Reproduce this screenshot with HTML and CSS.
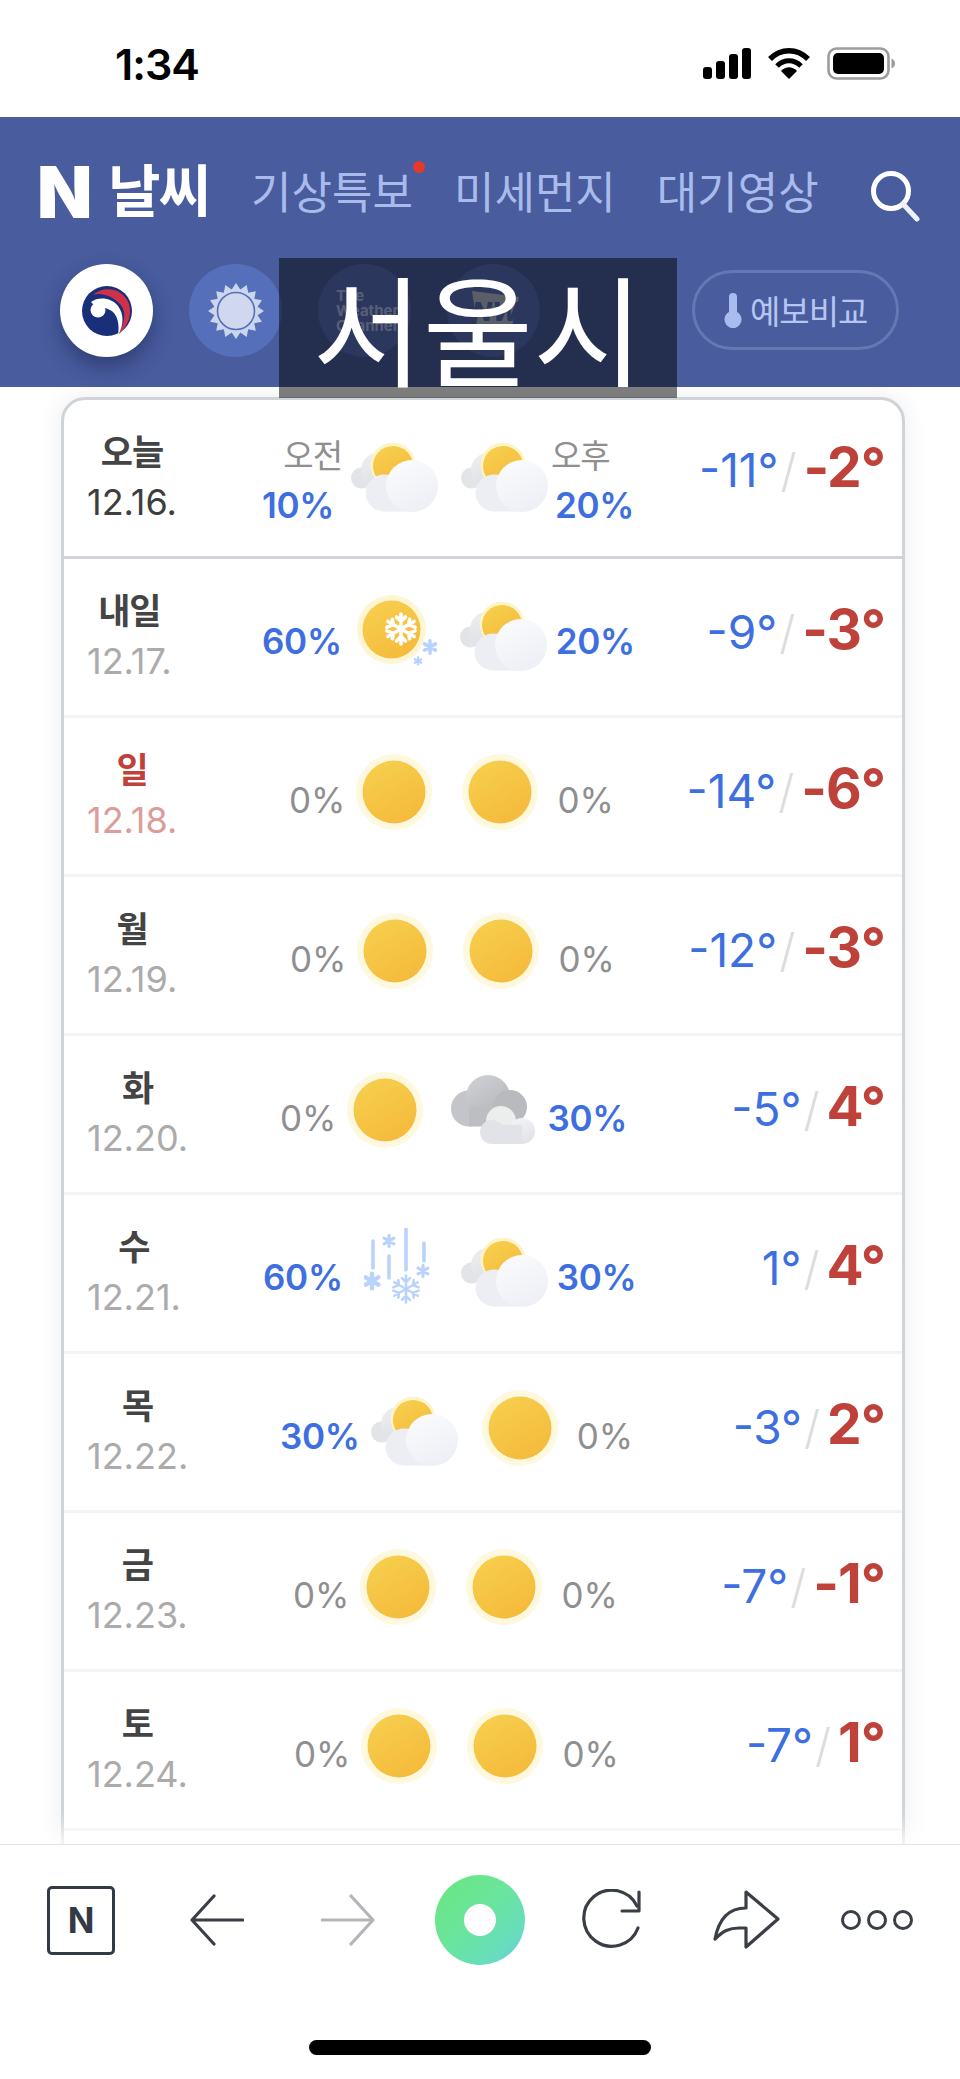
FILE: index.html
```html
<!DOCTYPE html>
<html lang="ko">
<head>
<meta charset="utf-8">
<title>N 날씨</title>
<link rel="stylesheet" href="styles.css">
</head>
<body>
<svg class="sprite" aria-hidden="true">
  <defs>
    <linearGradient id="sunG" x1="0.2" y1="0" x2="0.8" y2="1"><stop offset="0" stop-color="#f7cf4d"/><stop offset="1" stop-color="#f5b93b"/></linearGradient>
    <linearGradient id="cloudG" x1="0.2" y1="0" x2="0.7" y2="1"><stop offset="0" stop-color="#fbfbfd"/><stop offset="1" stop-color="#edeff5"/></linearGradient>
    <linearGradient id="cloudBack" x1="0.2" y1="0" x2="0.8" y2="1"><stop offset="0" stop-color="#eeeef1"/><stop offset="1" stop-color="#dcdde2"/></linearGradient>
    <linearGradient id="greyG" x1="0.2" y1="0" x2="0.8" y2="1"><stop offset="0" stop-color="#cfd0d3"/><stop offset="1" stop-color="#b3b4b7"/></linearGradient>
    <linearGradient id="smallG" x1="0.2" y1="0" x2="0.7" y2="1"><stop offset="0" stop-color="#f3f4f6"/><stop offset="1" stop-color="#e0e2e6"/></linearGradient>
    <g id="flake" stroke-linecap="round">
      <path d="M0-10V10M-8.7-5 8.7 5M-8.7 5 8.7-5M-3-8 0-5 3-8M-3 8 0 5 3 8M-9.4-1.2-5.200 -2.900-5.700-6.500M9.400 1.200 5.200 2.900 5.700 6.500M-9.400 1.200-5.200 2.900-5.700 6.500M9.400-1.200 5.200-2.900 5.700-6.500" fill="none"/>
    </g>
    <g id="blob" stroke-linecap="round">
      <path d="M0-8V8M-7-4 7 4M-7 4 7-4" fill="none"/>
    </g>
    <symbol id="i-partly" viewBox="0 0 88 70">
      <circle cx="10.500" cy="35" r="10.500" fill="#e3e4e8"/>
      <circle cx="27" cy="27" r="17" fill="url(#cloudBack)"/>
      <circle cx="42" cy="22" r="22.500" fill="#fdf4c8"/>
      <circle cx="42" cy="23" r="20" fill="url(#sunG)"/>
      <circle cx="33" cy="50" r="18.500" fill="#eceef4"/>
      <rect x="33" y="46" width="30" height="22.500" fill="#eceef4"/>
      <circle cx="61" cy="43" r="26" fill="url(#cloudG)"/>
    </symbol>
    <symbol id="i-sun" viewBox="0 0 76 76">
      <circle cx="38" cy="38" r="38" fill="#fef8de"/>
      <circle cx="38" cy="38" r="31.500" fill="url(#sunG)"/>
    </symbol>
    <symbol id="i-sunsnow" viewBox="0 0 80 74">
      <circle cx="34.500" cy="34.500" r="34.500" fill="#fef6d2"/>
      <circle cx="34.500" cy="34.500" r="29" fill="url(#sunG)"/>
      <use href="#flake" transform="translate(44 34) scale(1.500)" stroke="#fff" stroke-width="2.400"/>
      <use href="#blob" transform="translate(73 52) scale(.78)" stroke="#b7d2fb" stroke-width="4.500"/>
      <use href="#blob" transform="translate(61 66) scale(.45)" stroke="#b7d2fb" stroke-width="5"/>
    </symbol>
    <symbol id="i-snow" viewBox="0 0 66 76">
      <path d="M9 13V40M25 28V50M42 1V42M60 15V33" stroke="#b9d3fb" stroke-width="3.600" stroke-linecap="round" fill="none"/>
      <use href="#blob" transform="translate(25 13) scale(.7)" stroke="#b9d3fb" stroke-width="4.500"/>
      <use href="#blob" transform="translate(8 53) scale(.9)" stroke="#b9d3fb" stroke-width="5"/>
      <use href="#blob" transform="translate(59 43) scale(.7)" stroke="#b9d3fb" stroke-width="4.500"/>
      <use href="#flake" transform="translate(42 61) scale(1.350)" stroke="#b9d3fb" stroke-width="1.900"/>
    </symbol>
    <symbol id="i-grey" viewBox="0 0 84 70">
      <circle cx="18" cy="33.500" r="18" fill="#c4c5c8"/>
      <circle cx="37" cy="22" r="22" fill="url(#greyG)"/>
      <circle cx="59" cy="32" r="17" fill="#b9babd"/>
      <rect x="18" y="32" width="38" height="19.500" fill="#bdbec1"/>
      <circle cx="50" cy="46" r="15" fill="#eceded"/>
      <circle cx="41" cy="57" r="12" fill="#e2e3e7"/>
      <circle cx="71" cy="56" r="13" fill="url(#smallG)"/>
      <rect x="41" y="50" width="30" height="19" fill="#e2e3e7"/>
    </symbol>
  </defs>
</svg>

<header class="status">
  <span class="clock">1:34</span>
  <div class="status-icons">
    <svg class="sig" viewBox="0 0 48 31"><rect x="0" y="19" width="9" height="12" rx="3"/><rect x="13" y="13" width="9" height="18" rx="3"/><rect x="26" y="6" width="9" height="25" rx="3"/><rect x="39" y="0" width="9" height="31" rx="3"/></svg>
    <svg class="wifi" viewBox="0 0 42 31"><path d="M2 11C13 0 29 0 40 11" fill="none" stroke="#000" stroke-width="5.500"/><path d="M9 18C16 11 26 11 33 18" fill="none" stroke="#000" stroke-width="5"/><path d="M21 31 13 23C18 18 24 18 29 23Z"/></svg>
    <svg class="batt" viewBox="0 0 68 33"><rect x="1.500" y="1.500" width="60" height="30" rx="8" fill="none" stroke="#9c9c9c" stroke-width="2.600"/><rect x="6" y="6" width="51" height="21" rx="5"/><path d="M64.500 11.500C67 12.500 68 14.500 68 16.500 68 18.500 67 20.500 64.500 21.500Z" fill="#9c9c9c"/></svg>
  </div>
</header>

<section class="top">
  <div class="nav">
    <div class="brand"><span class="brand-n">N</span><span class="brand-t">날씨</span></div>
    <a class="tab tab-alert">기상특보<i class="dot"></i></a>
    <a class="tab">미세먼지</a>
    <a class="tab">대기영상</a>
    <svg class="search" viewBox="0 0 50 52"><circle cx="21" cy="21" r="17.500" fill="none" stroke="#fff" stroke-width="5"/><path d="M33 34 47 49" stroke="#eef1fb" stroke-width="5" stroke-linecap="round"/></svg>
  </div>
  <div class="sources">
    <span class="src src-kr">
      <svg class="tg" viewBox="0 0 52 52">
        <circle cx="26" cy="26" r="25" fill="#1a2f7a"/>
        <path d="M12 10C20 3 33 2 42 10 53 20 51 38 37 50 44 38 46 27 39 19 31 10 19 7 12 10Z" fill="#d0314a"/>
        <path d="M10 17C18 11 31 13 37 21 43 29 43 40 37 50 39 39 36 28 29 25 22 21 13 22 10 17Z" fill="#fff"/>
        <circle cx="17" cy="25" r="7.500" fill="#fff"/>
      </svg>
    </span>
    <span class="src src-on">
      <svg class="acc" viewBox="-28 -28 56 56">
        <polygon fill="#cbd5ec" points="0,-28 4.300,-21.600 10.700,-25.900 12.200,-18.300 19.800,-19.800 18.300,-12.200 25.900,-10.700 21.600,-4.300 28,0 21.600,4.300 25.900,10.700 18.300,12.200 19.800,19.800 12.200,18.300 10.700,25.900 4.300,21.600 0,28 -4.300,21.600 -10.700,25.900 -12.200,18.300 -19.800,19.800 -18.300,12.200 -25.900,10.700 -21.600,4.300 -28,0 -21.600,-4.300 -25.900,-10.700 -18.300,-12.200 -19.800,-19.800 -12.200,-18.300 -10.700,-25.900 -4.300,-21.600"/>
        <circle r="18.500" fill="#cfd8ee" stroke="#566fba" stroke-width="1.600"/>
      </svg>
    </span>
    <span class="src src-on twc">The<br>Weather<br>Channel</span>
    <span class="src src-on nw">
      <svg class="nw-logo" viewBox="0 0 50 40"><path d="M3 0 50 6 42 40 8 34Z" fill="#b4bccf"/><text x="3" y="30" class="nw-t">NW</text></svg>
    </span>
    <a class="compare">
      <svg class="therm" viewBox="0 0 18 36"><path d="M5 5a4 4 0 0 1 8 0V20a8.500 8.500 0 1 1-8 0Z" fill="#a9bcf0"/></svg>
      <span>예보비교</span>
    </a>
  </div>
</section>

<main class="main">
  <div class="card">
    <div class="row today">
      <div class="day"><b>오늘</b><span>12.16.</span></div>
      <div class="wx s1">
        <div class="stack"><em class="tag">오전</em><span class="pct hi">10%</span></div>
        <svg class="ic partly"><use href="#i-partly"/></svg>
        <svg class="ic partly"><use href="#i-partly"/></svg>
        <div class="stack stack-r"><em class="tag">오후</em><span class="pct hi">20%</span></div>
      </div>
      <div class="temp"><span class="lo">-11°</span><i class="sl">/</i><strong class="up">-2°</strong></div>
    </div>
    <div class="row">
      <div class="day"><b>내일</b><span>12.17.</span></div>
      <div class="wx s1">
        <span class="pct hi">60%</span>
        <svg class="ic sunsnow"><use href="#i-sunsnow"/></svg>
        <svg class="ic partly"><use href="#i-partly"/></svg>
        <span class="pct hi">20%</span>
      </div>
      <div class="temp"><span class="lo">-9°</span><i class="sl">/</i><strong class="up">-3°</strong></div>
    </div>
    <div class="row sun">
      <div class="day"><b>일</b><span>12.18.</span></div>
      <div class="wx s3">
        <span class="pct">0%</span>
        <svg class="ic suny"><use href="#i-sun"/></svg>
        <svg class="ic suny"><use href="#i-sun"/></svg>
        <span class="pct">0%</span>
      </div>
      <div class="temp"><span class="lo">-14°</span><i class="sl">/</i><strong class="up">-6°</strong></div>
    </div>
    <div class="row">
      <div class="day"><b>월</b><span>12.19.</span></div>
      <div class="wx s4">
        <span class="pct">0%</span>
        <svg class="ic suny"><use href="#i-sun"/></svg>
        <svg class="ic suny"><use href="#i-sun"/></svg>
        <span class="pct">0%</span>
      </div>
      <div class="temp"><span class="lo">-12°</span><i class="sl">/</i><strong class="up">-3°</strong></div>
    </div>
    <div class="row">
      <div class="day"><b>화</b><span>12.20.</span></div>
      <div class="wx s5">
        <span class="pct">0%</span>
        <svg class="ic suny"><use href="#i-sun"/></svg>
        <svg class="ic grey"><use href="#i-grey"/></svg>
        <span class="pct hi">30%</span>
      </div>
      <div class="temp"><span class="lo">-5°</span><i class="sl">/</i><strong class="up">4°</strong></div>
    </div>
    <div class="row">
      <div class="day"><b>수</b><span>12.21.</span></div>
      <div class="wx s6">
        <span class="pct hi">60%</span>
        <svg class="ic snow"><use href="#i-snow"/></svg>
        <svg class="ic partly"><use href="#i-partly"/></svg>
        <span class="pct hi">30%</span>
      </div>
      <div class="temp"><span class="lo">1°</span><i class="sl">/</i><strong class="up">4°</strong></div>
    </div>
    <div class="row">
      <div class="day"><b>목</b><span>12.22.</span></div>
      <div class="wx s7">
        <span class="pct hi">30%</span>
        <svg class="ic partly"><use href="#i-partly"/></svg>
        <svg class="ic suny"><use href="#i-sun"/></svg>
        <span class="pct">0%</span>
      </div>
      <div class="temp"><span class="lo">-3°</span><i class="sl">/</i><strong class="up">2°</strong></div>
    </div>
    <div class="row">
      <div class="day"><b>금</b><span>12.23.</span></div>
      <div class="wx s8">
        <span class="pct">0%</span>
        <svg class="ic suny"><use href="#i-sun"/></svg>
        <svg class="ic suny"><use href="#i-sun"/></svg>
        <span class="pct">0%</span>
      </div>
      <div class="temp"><span class="lo">-7°</span><i class="sl">/</i><strong class="up">-1°</strong></div>
    </div>
    <div class="row">
      <div class="day"><b>토</b><span>12.24.</span></div>
      <div class="wx s9">
        <span class="pct">0%</span>
        <svg class="ic suny"><use href="#i-sun"/></svg>
        <svg class="ic suny"><use href="#i-sun"/></svg>
        <span class="pct">0%</span>
      </div>
      <div class="temp"><span class="lo">-7°</span><i class="sl">/</i><strong class="up">1°</strong></div>
    </div>
    <div class="row"></div>
  </div>
</main>

<footer class="bar">
  <div class="tools">
    <span class="n-box">N</span>
    <svg class="t-arrow" viewBox="0 0 54 52"><path d="M53 26H2M24 2 2 26 24 50" fill="none" stroke="#3a3f47" stroke-width="3.200" stroke-linecap="round" stroke-linejoin="round"/></svg>
    <svg class="t-arrow t-next" viewBox="0 0 54 52"><path d="M1 26H52M30 2 52 26 30 50" fill="none" stroke="#b4b5b8" stroke-width="3.200" stroke-linecap="round" stroke-linejoin="round"/></svg>
    <span class="orb"><i></i></span>
    <svg class="t-reload" viewBox="0 0 62 62"><path d="M57 39A28 28 0 1 1 56 17" fill="none" stroke="#3a3f47" stroke-width="3.200" stroke-linecap="round"/><path d="M58 3V22H41" fill="none" stroke="#3a3f47" stroke-width="3.200" stroke-linecap="round" stroke-linejoin="round"/></svg>
    <svg class="t-share" viewBox="0 0 70 60"><path d="M34 2 66 29 34 57V38H27C17 38 11 41 3 49 6 33 14 18 34 18Z" fill="none" stroke="#3a3f47" stroke-width="3.200" stroke-linejoin="round"/></svg>
    <div class="t-more"><i></i><i></i><i></i></div>
  </div>
  <div class="home"></div>
</footer>

<div class="veil">서울시</div>
</body>
</html>
```

FILE: styles.css
```css
* { box-sizing: border-box; }
html, body { margin: 0; padding: 0; }
body {
  width: 960px;
  height: 2079px;
  position: relative;
  overflow: hidden;
  display: flex;
  flex-direction: column;
  background: #fff;
  font-family: Inter, "Noto Sans CJK KR", "Liberation Sans", sans-serif;
}
.sprite { position: absolute; width: 0; height: 0; }

/* status bar */
.status {
  height: 117px;
  flex: none;
  display: flex;
  align-items: flex-start;
  justify-content: space-between;
  padding: 40px 65px 0 115px;
}
.clock { font-size: 43px; line-height: 48px; font-weight: 600; letter-spacing: -1px; color: #000; }
.status-icons { display: flex; align-items: flex-start; padding-top: 8px; }
.sig { width: 48px; height: 31px; margin-right: 17px; }
.wifi { width: 42px; height: 31px; margin-right: 17px; }
.batt { width: 68px; height: 33px; margin-top: -1px; }

/* blue header */
.top { height: 270px; flex: none; background: #485c9e; }
.nav { height: 147px; display: flex; align-items: flex-start; padding: 47px 40px 0 37px; }
.brand { display: flex; align-items: center; width: 214px; height: 56px; color: #fff; }
.brand-n { font-size: 72px; font-weight: 900; line-height: 56px; width: 71px; }
.brand-t { font-size: 57px; font-weight: 700; line-height: 56px; letter-spacing: -2px; }
.tab { position: relative; font-size: 44px; line-height: 58px; color: #a9bbeb; letter-spacing: 0; margin-right: 41px; white-space: nowrap; }
.dot { position: absolute; right: -12px; top: -3px; width: 12px; height: 12px; border-radius: 50%; background: #e5392e; }
.search { width: 50px; height: 52px; margin-left: auto; margin-top: 6px; }
.sources { display: flex; align-items: flex-start; padding-left: 60px; gap: 36px; }
.src {
  width: 93px;
  height: 93px;
  border-radius: 50%;
  flex: none;
  display: flex;
  align-items: center;
  justify-content: center;
}
.src-kr { background: #fff; box-shadow: 0 10px 20px rgba(20, 28, 70, .45); }
.src-on { background: #566fba; }
.tg { width: 52px; height: 52px; }
.acc { width: 56px; height: 56px; }
.twc { display: block; padding: 24px 0 0 18px; font-size: 15px; line-height: 15px; font-weight: 700; color: #aebdf0; }
.nw-logo { width: 50px; height: 40px; }
.nw-t { font-size: 26px; font-weight: 800; font-style: italic; fill: #566fba; }
.compare {
  display: flex;
  align-items: center;
  height: 80px;
  width: 207px;
  margin: 6px 0 0 116px;
  padding-left: 29px;
  border: 3px solid #6578b3;
  border-radius: 40px;
  color: #b6c6f2;
  font-size: 33px;
  letter-spacing: -1px;
  white-space: nowrap;
}
.therm { width: 18px; height: 36px; margin-right: 8px; }

/* forecast card */
.main { flex: 1; min-height: 0; overflow: hidden; padding: 10px 55px 0 61px; background: #fff; }
.card {
  background: #fff;
  border: 3px solid #d0d4d9;
  border-radius: 24px 24px 0 0;
  box-shadow: 0 0 24px rgba(40, 50, 70, .09);
}
.row {
  position: relative;
  display: grid;
  grid-template-columns: 130px 1fr;
  align-items: start;
  height: 159px;
  padding-left: 23px;
  border-bottom: 3px solid #f2f3f5;
}
.today { border-bottom-color: #d0d4d9; }
.day {
  justify-self: start;
  display: flex;
  flex-direction: column;
  align-items: center;
  padding-top: 32px;
}
.day b, .day span { display: block; }
.day b { font-size: 35px; line-height: 40px; font-weight: 700; color: #444; letter-spacing: -1px; }
.day span { font-size: 36px; line-height: 40px; margin-top: 10px; color: #ababab; letter-spacing: 0; }
.today .day span { color: #3e3e3e; }
.sun .day b { color: #c0413a; }
.sun .day span { color: #dc9c98; }

.wx { display: flex; align-items: flex-start; }
.s1 { margin-left: 45px; }
.s3 { margin-left: 72px; }
.s4 { margin-left: 73px; }
.s5 { margin-left: 63px; }
.s6 { margin-left: 46px; }
.s7 { margin-left: 63px; }
.s8 { margin-left: 76px; }
.s9 { margin-left: 77px; }

.pct { font-size: 35px; line-height: 40px; margin-top: 62px; color: #8f8f8f; letter-spacing: 0; white-space: nowrap; }
.pct.hi { color: #3d6fe0; font-weight: 600; letter-spacing: -.3px; }
.stack { display: flex; flex-direction: column; align-items: flex-end; width: 80px; margin-right: -5px; }
.stack .pct { align-self: flex-start; margin-top: 11px; }
.stack-r { align-items: flex-start; width: auto; margin: 0 0 0 -6px; }
.stack-r .pct { margin-left: 4px; }
.tag { font-style: normal; font-size: 33px; line-height: 36px; color: #8f8f8f; margin-top: 38px; letter-spacing: -1px; }

.ic { flex: none; display: block; }
.partly { width: 88px; height: 70px; margin: 43px 8px 0 11px; }
.today .partly { margin-left: 14px; }
.suny { width: 76px; height: 76px; margin: 36px 19px 0 11px; }
.s7 .suny { margin-left: 15px; }
.sunsnow { width: 80px; height: 74px; margin: 36px 12px 0 15px; }
.snow { width: 66px; height: 76px; margin: 33px 20px 0 21px; }
.grey { width: 84px; height: 70px; margin: 39px 12px 0 9px; }

.temp {
  position: absolute;
  right: 17px;
  top: 40px;
  display: flex;
  align-items: baseline;
}
.today .temp { top: 37px; }
.lo { font-size: 46px; line-height: 60px; color: #3d6fe0; letter-spacing: 0; }
.sl { font-style: normal; font-size: 46px; line-height: 60px; font-weight: 300; color: #dcdcdc; margin: 0 7px 0 2px; }
.up { font-size: 55px; line-height: 60px; font-weight: 700; color: #be4239; letter-spacing: -1px; }

/* bottom toolbar */
.bar {
  height: 235px;
  flex: none;
  position: relative;
  background: #fff;
  border-top: 1px solid #e2e4e8;
  box-shadow: 0 -14px 20px rgba(255, 255, 255, .8);
}
.tools { display: flex; align-items: center; height: 90px; margin-top: 30px; padding-left: 47px; }
.n-box {
  width: 68px;
  height: 69px;
  flex: none;
  display: flex;
  align-items: center;
  justify-content: center;
  border: 3px solid #333a45;
  border-radius: 5px;
  font-size: 35px;
  font-weight: 700;
  color: #333a45;
}
.t-arrow { width: 54px; height: 52px; flex: none; margin-left: 75px; }
.t-next { margin-left: 77px; }
.orb { width: 90px; height: 90px; flex: none; border-radius: 50%; background: linear-gradient(135deg, #6ae67f 0%, #6ae59b 45%, #68dcc0 80%, #5cc2e2 100%); margin-left: 60px; display: flex; align-items: center; justify-content: center; }
.orb i { width: 32px; height: 32px; border-radius: 50%; background: #fff; }
.t-reload { width: 62px; height: 62px; flex: none; margin-left: 56px; }
.t-share { width: 70px; height: 60px; flex: none; margin-left: 69px; }
.t-more { display: flex; gap: 6px; margin-left: 59px; }
.t-more i { width: 20px; height: 20px; border: 3px solid #3a3f47; border-radius: 50%; }
.home { position: absolute; left: 309px; top: 195px; width: 342px; height: 15px; border-radius: 8px; background: #000; }

/* redaction overlay */
.veil {
  position: absolute;
  left: 279px;
  top: 258px;
  width: 398px;
  height: 140px;
  background: rgba(0, 0, 0, .5);
  color: #fff;
  font-size: 120px;
  line-height: 136px;
  text-align: center;
  font-family: "Noto Sans CJK KR", sans-serif;
  white-space: nowrap;
}
```
